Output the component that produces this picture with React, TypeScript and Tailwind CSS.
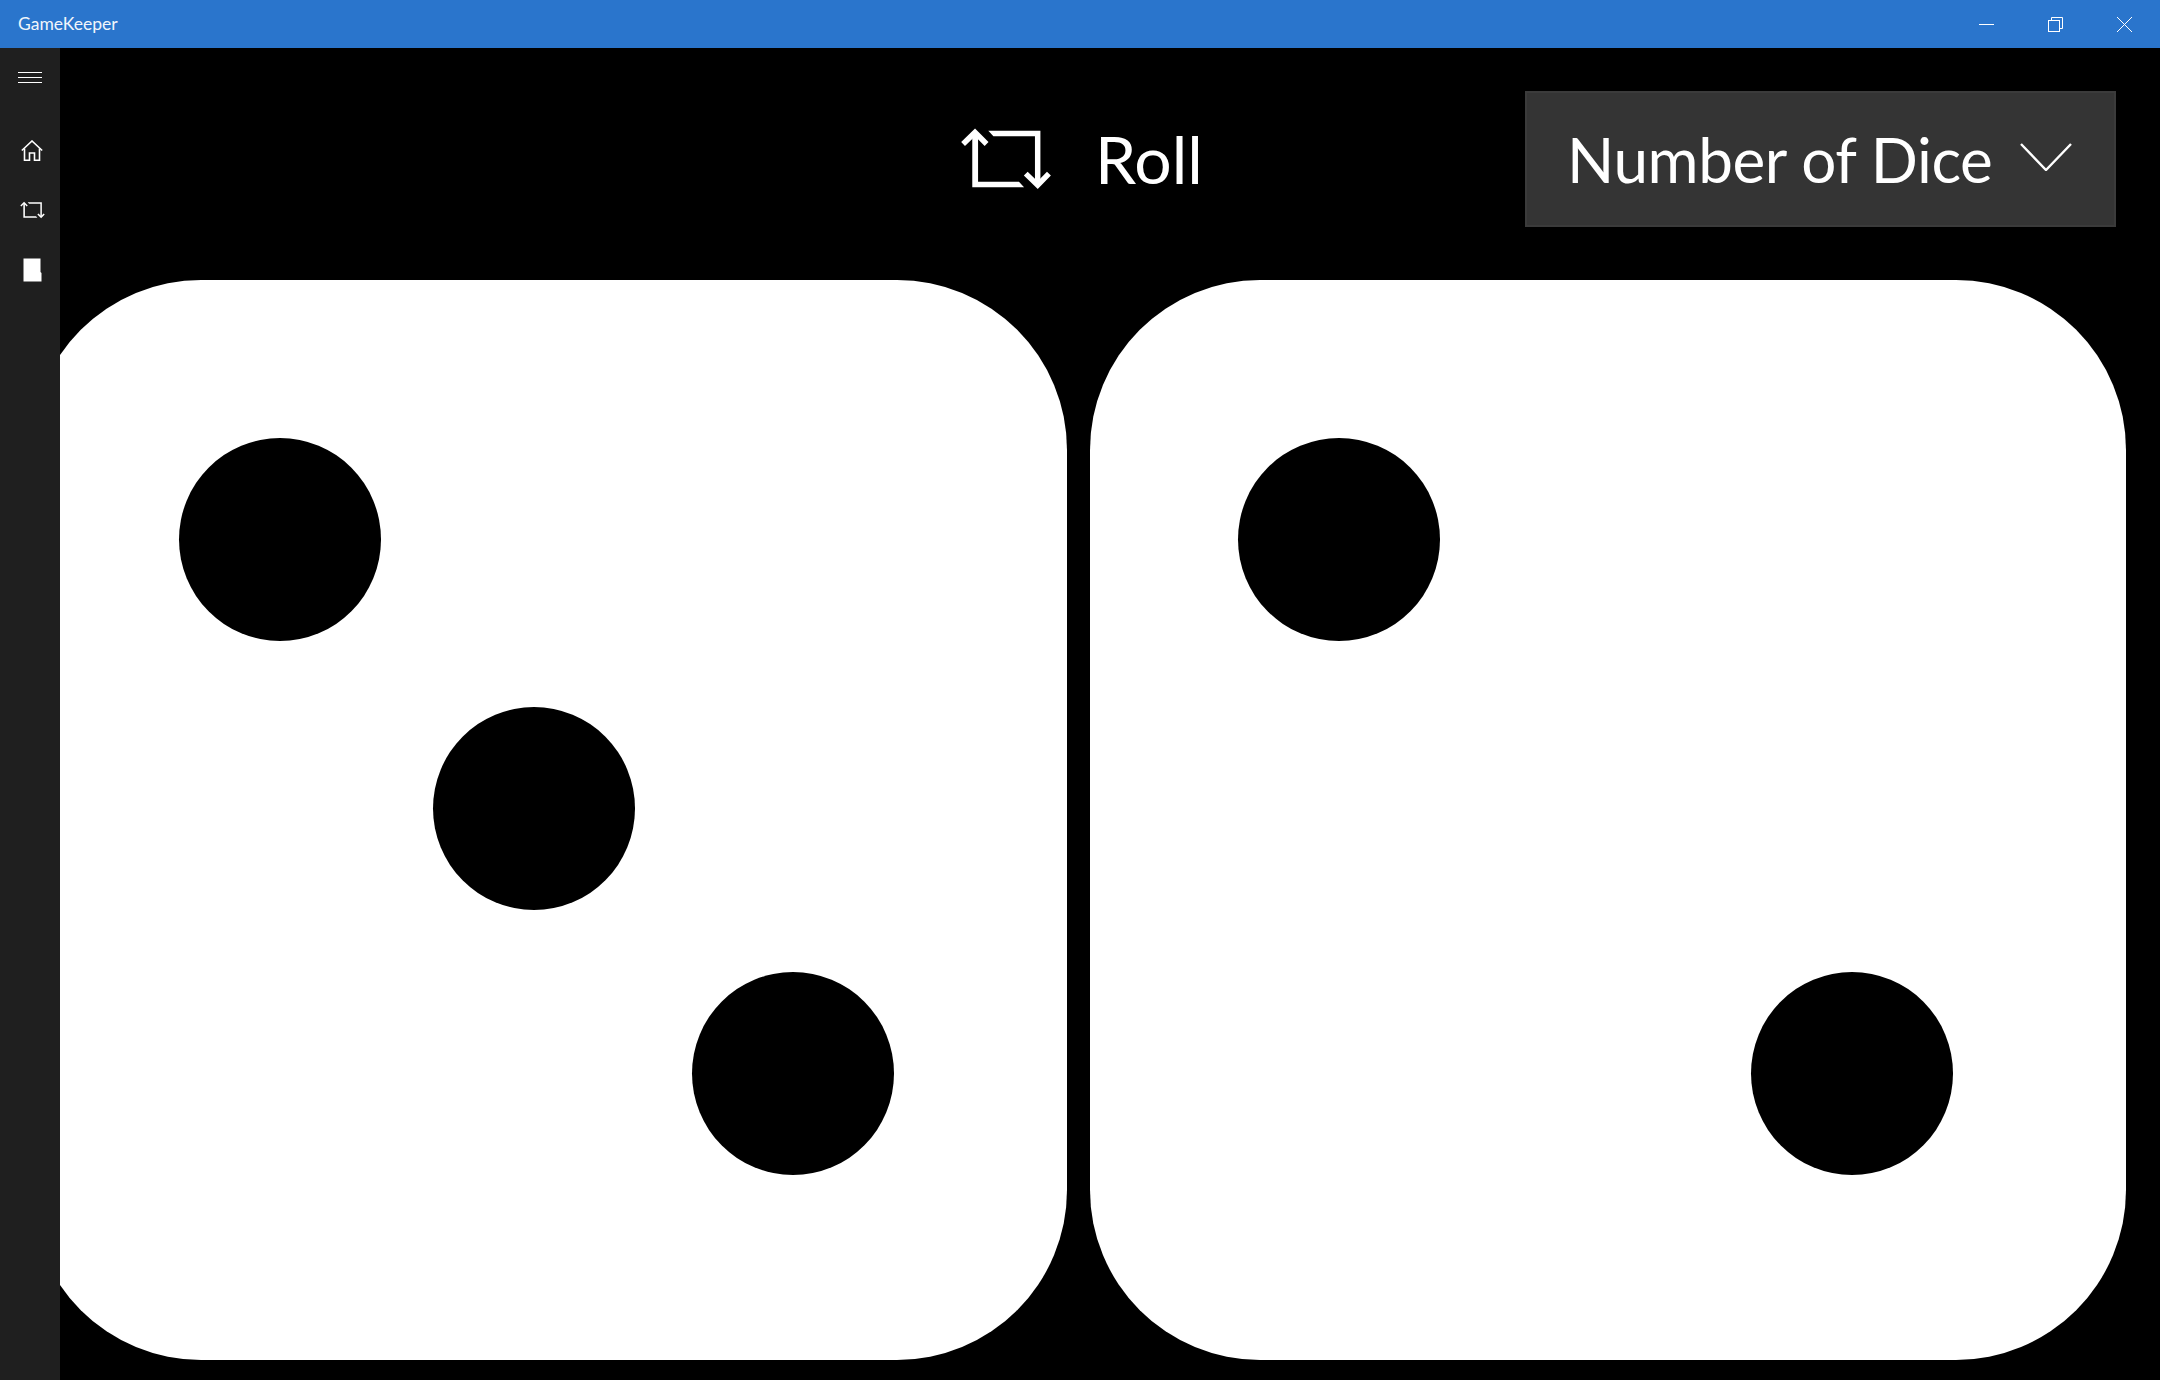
import React from 'react';

const FONT = "font-['Lato','Open_Sans',sans-serif]";

const RepeatIcon = ({ className }: { className: string }) => (
  <svg viewBox="92 84 270 182" className={className}>
    <path d="M128 100H145V242H265L280 258H128Z" fill="#fff" />
    <path d="M175 92H328V250H312V108H190Z" fill="#fff" />
    <path d="M101 131L136 97L170 131" fill="none" stroke="#fff" strokeWidth="16" />
    <path d="M285 218L320 252L353 218" fill="none" stroke="#fff" strokeWidth="16" />
  </svg>
);

const HomeIcon = () => (
  <svg viewBox="0 0 22 21" className="w-[22px] h-[21px]" fill="none" stroke="#fff" strokeWidth="1.6">
    <path d="M0.8 10.5L11 1L21.2 10.5" />
    <path d="M3.5 8.5V20.2H8.5V13H13.5V20.2H18.5V8.5" />
  </svg>
);

const PageIcon = () => (
  <svg viewBox="0 0 19 24" className="w-[19px] h-[24px]">
    <path d="M0.5 0.5H17.5V14L18.5 15V23.5H0.5Z" fill="#fff" />
  </svg>
);

const MenuIcon = () => (
  <div className="flex flex-col gap-[4.3px] w-[24px]">
    <div className="h-px bg-white" />
    <div className="h-px bg-white" />
    <div className="h-px bg-white" />
  </div>
);

const Pip = ({ className }: { className: string }) => (
  <div className={`absolute w-[202px] h-[203px] rounded-[50%] bg-black ${className}`} />
);

const Die = ({ children }: { children: React.ReactNode }) => (
  <div className="relative flex-none w-[1036px] h-[1080px] rounded-[170px] bg-white">{children}</div>
);

const NavRow = ({ children }: { children: React.ReactNode }) => (
  <div className="h-[60px] flex items-center justify-center pl-[4px]">{children}</div>
);

export default function App() {
  return (
    <div className={`w-[2160px] h-[1380px] flex flex-col bg-black text-white overflow-hidden ${FONT}`}>
      {/* Barre de titre */}
      <div className="h-[48px] flex-none flex items-center justify-between bg-[#2a75cc]">
        <span className="pl-[18px] text-[17.5px] text-[#f0f5fb]">GameKeeper</span>
        <div className="flex pr-px">
          <div className="w-[69px] h-[48px] flex items-center justify-center">
            <div className="w-[15px] h-px bg-white" />
          </div>
          <div className="w-[69px] h-[48px] flex items-center justify-center">
            <svg viewBox="0 0 15 15" className="w-[15px] h-[15px]" fill="none" stroke="#fff" strokeWidth="1">
              <path d="M3.5 3V0.5H14.5V11.5H12" />
              <rect x="0.5" y="3.5" width="11" height="11" />
            </svg>
          </div>
          <div className="w-[69px] h-[48px] flex items-center justify-center">
            <svg viewBox="0 0 15 15" className="w-[15px] h-[15px]" stroke="#fff" strokeWidth="1">
              <path d="M0 0L15 15M15 0L0 15" />
            </svg>
          </div>
        </div>
      </div>

      <div className="flex-1 flex min-h-0">
        {/* Menu latéral */}
        <div className="w-[60px] flex-none flex flex-col bg-[#1f1f1f] z-10">
          <div className="h-[59px] mb-[13px] flex items-center justify-center">
            <MenuIcon />
          </div>
          <NavRow><HomeIcon /></NavRow>
          <NavRow><RepeatIcon className="w-[25px] h-[18px]" /></NavRow>
          <NavRow><PageIcon /></NavRow>
        </div>

        <div className="flex-1 min-w-0 flex flex-col">
          <div className="h-[232px] flex-none flex items-start pl-[900px] pt-[43px]">
            <div className="h-[135px] flex items-center gap-[43px]">
              <RepeatIcon className="w-[92px] h-[62px]" />
              <span className="text-[66px] leading-none">Roll</span>
            </div>
            <div className="ml-auto mr-[44px] w-[591px] h-[136px] flex items-center pl-[40px] bg-[#343434] border-2 border-[#3b3b3b]">
              <span className="text-[62px] leading-none tracking-[-0.4px]">Number of Dice</span>
              <svg viewBox="0 0 52 28" className="w-[52px] h-[28px] ml-auto mr-[42px] -mt-[4px]" fill="none" stroke="#fff" strokeWidth="2.4">
                <path d="M1 1L26 27L51 1" />
              </svg>
            </div>
          </div>

          <div className="flex gap-[23px] -ml-[29px]">
            <Die>
              <Pip className="left-[148px] top-[158px]" />
              <Pip className="left-[402px] top-[427px]" />
              <Pip className="left-[661px] top-[692px]" />
            </Die>
            <Die>
              <Pip className="left-[148px] top-[158px]" />
              <Pip className="left-[661px] top-[692px]" />
            </Die>
          </div>
        </div>
      </div>
    </div>
  );
}
